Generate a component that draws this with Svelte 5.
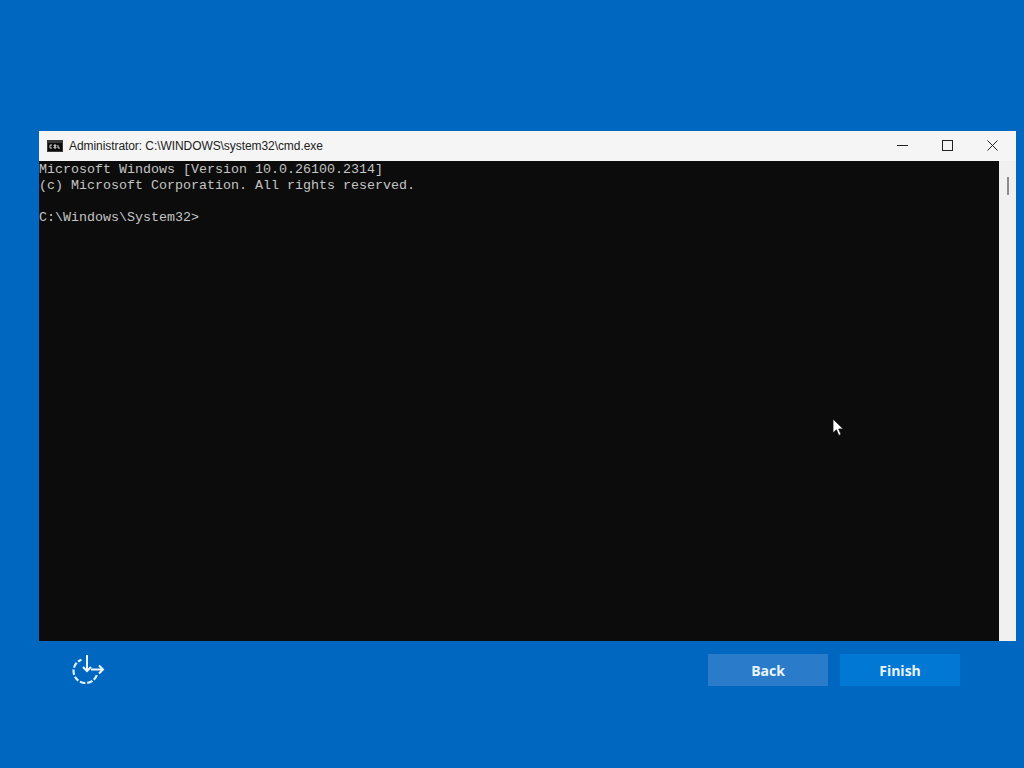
<script lang="ts">
    const lines = [
        'Microsoft Windows [Version 10.0.26100.2314]',
        '(c) Microsoft Corporation. All rights reserved.',
        '',
        'C:\\Windows\\System32>'
    ];
</script>

<div class="screen">
    <div class="window">
        <div class="titlebar">
            <svg class="app-icon" width="16" height="12" viewBox="0 0 16 12">
                <rect width="16" height="12" fill="#3a3a3a" />
                <rect x="1" y="3" width="14" height="8" fill="#0c0c0c" />
                <path d="M3 5h2M3 5v3M3 8h2M7 5h2v1H7zM7 8h2v-1H7zM11 5v3h2" stroke="#d8d8d8" stroke-width="1" fill="none" />
            </svg>
            <span class="title">Administrator: C:\WINDOWS\system32\cmd.exe</span>
            <div class="controls">
                <svg width="11" height="11" viewBox="0 0 11 11"><path d="M0 5.5h11" stroke="#222" /></svg>
                <svg width="11" height="11" viewBox="0 0 11 11"><rect x="0.5" y="0.5" width="10" height="10" fill="none" stroke="#222" /></svg>
                <svg width="11" height="11" viewBox="0 0 11 11"><path d="M0.5 0.5l10 10M10.5 0.5l-10 10" stroke="#222" /></svg>
            </div>
        </div>
        <div class="body">
            <pre class="console">{#each lines as line}<div class="line">{line}</div>{/each}</pre>
            <div class="scrollbar"><div class="thumb"></div></div>
            <svg class="cursor" width="12" height="19" viewBox="0 0 12 19">
                <path d="M1 1v14l3.4-3.2 2.4 5.6 2.3-1-2.4-5.4h4.6z" fill="#fff" stroke="#111" stroke-width="0.8" />
            </svg>
        </div>
    </div>
    <div class="footer">
        <svg class="power" width="34" height="30" viewBox="0 0 34 30">
            <path d="M25.8 21.1A12 12 0 1 1 10.5 5.7" fill="none" stroke="#e4f1fb" stroke-width="2.2" stroke-dasharray="5.5 1.8" />
            <path d="M16 1v16M12 13l4 4 4-4M20 15.5h12M28 11.5l4 4-4 4" fill="none" stroke="#eef6fc" stroke-width="2" />
        </svg>
        <div class="buttons">
            <button class="btn back">Back</button>
            <button class="btn finish">Finish</button>
        </div>
    </div>
</div>

<style>
    :global(body) {
        background: #0067c0;
    }
    .screen {
        box-sizing: border-box;
        width: 1024px;
        height: 768px;
        padding: 131px 8px 0 39px;
        background: #0067c0;
        overflow: hidden;
    }
    .window {
        width: 977px;
        background: #f0f0f0;
    }
    .titlebar {
        display: flex;
        align-items: center;
        height: 30px;
        padding-left: 8px;
        background: #f5f5f5;
    }
    .app-icon {
        flex: none;
    }
    .title {
        margin-left: 6px;
        font: 12px "Liberation Sans", Arial, sans-serif;
        letter-spacing: -0.07px;
        color: #222;
    }
    .controls {
        display: flex;
        gap: 34px;
        margin-left: auto;
        padding: 0 18px 2px 0;
    }
    .controls svg {
        display: block;
    }
    .body {
        position: relative;
        display: flex;
        height: 480px;
    }
    .console {
        box-sizing: border-box;
        flex: none;
        width: 960px;
        height: 480px;
        margin: 0;
        padding-top: 1px;
        background: #0c0c0c;
        color: #c4c4c4;
        font: 13.33px/16px "Liberation Mono", monospace;
    }
    .line {
        height: 16px;
    }
    .scrollbar {
        flex: 1;
        background: #f0f0f0;
    }
    .thumb {
        width: 2px;
        height: 18px;
        margin: 16px 0 0 8px;
        background: #8c8c8c;
    }
    .cursor {
        position: absolute;
        left: 793px;
        top: 257px;
    }
    .footer {
        box-sizing: border-box;
        display: flex;
        align-items: flex-start;
        justify-content: space-between;
        width: 921px;
        padding: 13px 0 0 32px;
    }
    .buttons {
        display: flex;
        gap: 12px;
    }
    .btn {
        width: 120px;
        height: 32px;
        padding: 0;
        border: none;
        color: #eaf4fc;
        font: 700 14px "Open Sans", "Liberation Sans", sans-serif;
    }
    .back {
        background: #2a7ccb;
    }
    .finish {
        background: #0078d4;
    }
</style>
